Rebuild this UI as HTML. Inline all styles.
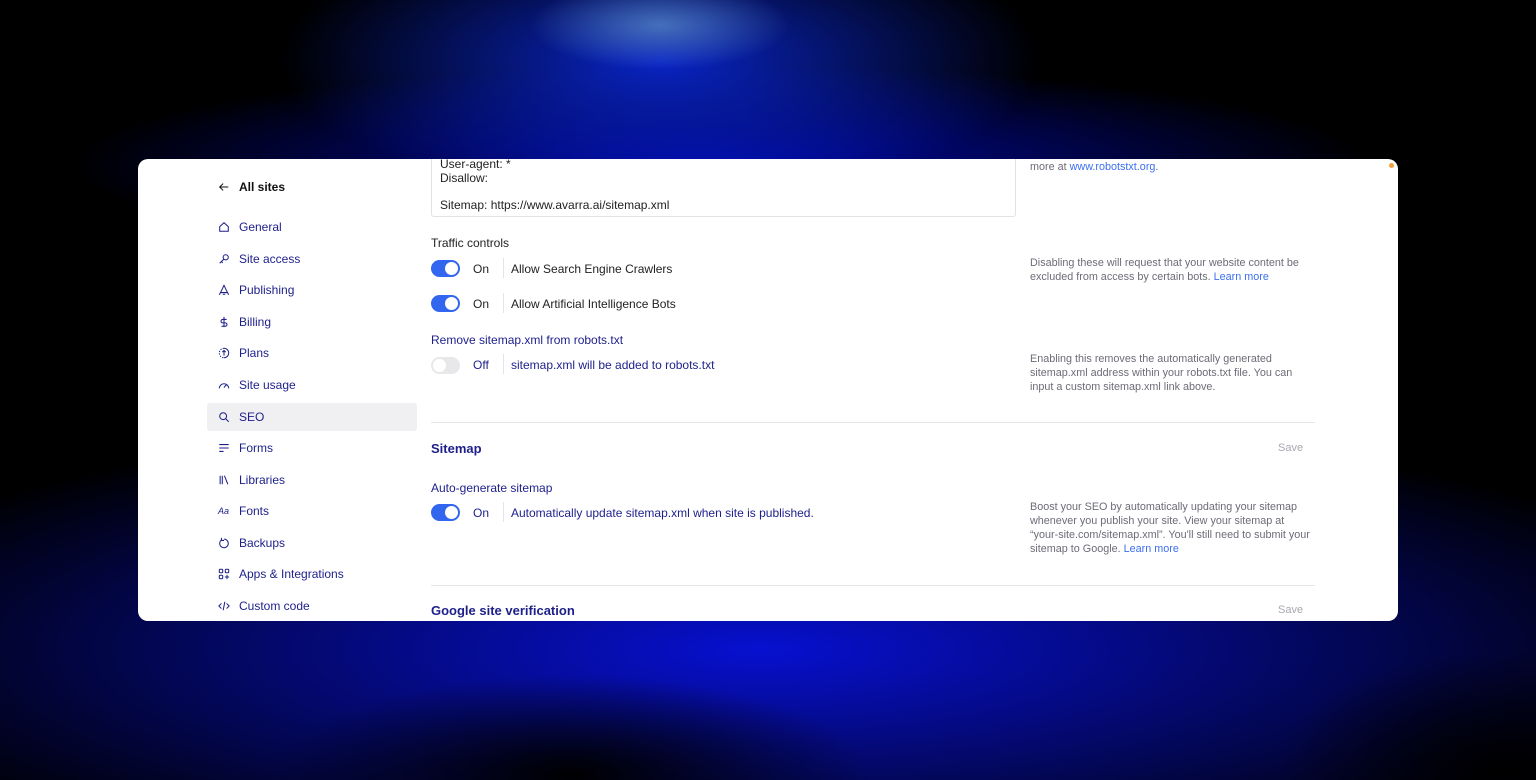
<!DOCTYPE html>
<html><head><meta charset="utf-8"><style>
*{box-sizing:border-box;margin:0;padding:0}
html,body{width:1536px;height:780px;overflow:hidden;background:#000}
body{position:relative;font-family:"Liberation Sans",sans-serif;}
.bg{position:absolute;inset:0;background:
radial-gradient(ellipse 130px 45px at 660px 25px,rgba(90,140,200,.75),rgba(90,140,200,0) 100%),
radial-gradient(ellipse 380px 140px at 660px 60px,rgba(10,40,220,.9),rgba(10,30,200,0) 100%),
radial-gradient(ellipse 650px 100px at 720px 165px,rgba(0,10,190,.85),rgba(0,0,150,0) 100%),
radial-gradient(ellipse 300px 100px at 570px 775px,#000,rgba(0,0,0,0) 100%),
radial-gradient(ellipse 220px 120px at 1500px 770px,#000,rgba(0,0,0,0) 100%),
radial-gradient(ellipse 1000px 240px at 760px 650px,#0710d0,rgba(5,10,200,0) 100%),
#000;}
.card{position:absolute;left:138px;top:159px;width:1260px;height:462px;background:#fff;border-radius:10px;overflow:hidden;}
.nav{position:absolute;left:69px;height:28px;width:210px;display:flex;align-items:center;padding-left:11px;font-size:12px;color:#1d1f8a}
.nav svg{width:12px;height:12px;margin-right:9px;stroke:#1d1f8a;fill:none;stroke-width:1.2}
.sel{background:#f0eff2;border-radius:3px}
.c{position:absolute;font-size:12px;color:#222}
.ta{position:absolute;left:293px;top:-12px;width:585px;height:70px;border:1px solid #e2e2e6;border-radius:3px;padding:10px 8px;font-size:12px;line-height:13.5px;color:#222}
.tg{position:absolute;width:29px;height:17px;border-radius:9px;background:#3366ee}
.tg::after{content:"";position:absolute;right:2px;top:2px;width:13px;height:13px;border-radius:50%;background:#fff}
.tg.off{background:#e8e8ea}
.tg.off::after{left:2px;right:auto}
.sep{position:absolute;width:1px;height:20px;background:#e4e4e8}
.desc{position:absolute;left:892px;font-size:10.8px;line-height:14px;color:#6c6c78;width:290px}
.desc a{color:#3c6ff0;text-decoration:none}
.hr{position:absolute;left:293px;width:884px;height:1px;background:#e6e6ea}
.h{position:absolute;left:293px;font-size:13px;font-weight:bold;color:#1d1f8a}
.save{position:absolute;left:1140px;font-size:11px;color:#a8a8b0}
.navy{color:#1d1f8a}
</style></head><body>
<div class="bg"></div>
<div class="card">
 <div class="nav" style="top:14px;color:#111;font-weight:bold"><svg viewBox="0 0 14 14" style="stroke:#111"><path d="M12 7H2M6 3L2 7l4 4"/></svg>All sites</div>
 <div class="nav" style="top:54px"><svg viewBox="0 0 14 14"><path d="M2 6.5L7 2l5 4.5V12H2z"/></svg>General</div>
 <div class="nav" style="top:86px"><svg viewBox="0 0 14 14"><circle cx="9" cy="5" r="3"/><path d="M7 7L2 12M4 10l1.5 1.5"/></svg>Site access</div>
 <div class="nav" style="top:117px"><svg viewBox="0 0 14 14"><path d="M7 1.5L11 10H3zM3 10l-1.5 2.5M11 10l1.5 2.5M5.5 12h3"/></svg>Publishing</div>
 <div class="nav" style="top:149px"><svg viewBox="0 0 14 14"><path d="M7 1v12M10 4H5.5a2 2 0 000 4h3a2 2 0 010 4H4"/></svg>Billing</div>
 <div class="nav" style="top:180px"><svg viewBox="0 0 14 14"><path d="M7 1.5a5.5 5.5 0 110 11" /><path d="M7 1.5a5.5 5.5 0 000 11" stroke-dasharray="1.5 1.5"/><path d="M7 10V4M5 6l2-2 2 2"/></svg>Plans</div>
 <div class="nav" style="top:212px"><svg viewBox="0 0 14 14"><path d="M1.5 11a5.5 5.5 0 0111 0M7 10l3-4"/></svg>Site usage</div>
 <div class="nav sel" style="top:244px"><svg viewBox="0 0 14 14"><circle cx="6" cy="6" r="4"/><path d="M9 9l3.5 3.5"/></svg>SEO</div>
 <div class="nav" style="top:275px"><svg viewBox="0 0 14 14"><path d="M1.5 3h11M1.5 7h11M1.5 11h5"/></svg>Forms</div>
 <div class="nav" style="top:307px"><svg viewBox="0 0 14 14"><path d="M2.5 2v10M5 2v10M7.5 2l4 10"/></svg>Libraries</div>
 <div class="nav" style="top:338px"><span style="font-size:9px;font-style:italic;width:12px;margin-right:9px">Aa</span>Fonts</div>
 <div class="nav" style="top:370px"><svg viewBox="0 0 14 14"><path d="M4 3.5a5 5 0 103-1M4 1v3h3"/></svg>Backups</div>
 <div class="nav" style="top:401px"><svg viewBox="0 0 14 14"><rect x="1.5" y="1.5" width="4" height="4" rx="1"/><rect x="8.5" y="1.5" width="4" height="4" rx="1"/><rect x="1.5" y="8.5" width="4" height="4" rx="1"/><path d="M10.5 8v5M8 10.5h5"/></svg>Apps &amp; Integrations</div>
 <div class="nav" style="top:433px"><svg viewBox="0 0 14 14"><path d="M4 4L1 7l3 3M10 4l3 3-3 3M8 2L6 12"/></svg>Custom code</div>

 <div class="ta">User-agent: *<br>Disallow:<br><br>Sitemap: https://www.avarra.ai/sitemap.xml</div>
 <div class="desc" style="top:1px">more at <a>www.robotstxt.org</a>.</div>

 <div class="c" style="left:293px;top:77px">Traffic controls</div>
 <div class="tg" style="left:293px;top:101px"></div><div class="c" style="left:335px;top:103px">On</div><div class="sep" style="left:365px;top:99px"></div><div class="c" style="left:373px;top:103px">Allow Search Engine Crawlers</div>
 <div class="tg" style="left:293px;top:136px"></div><div class="c" style="left:335px;top:138px">On</div><div class="sep" style="left:365px;top:134px"></div><div class="c" style="left:373px;top:138px">Allow Artificial Intelligence Bots</div>
 <div class="desc" style="top:97px">Disabling these will request that your website content be excluded from access by certain bots. <a>Learn more</a></div>

 <div class="c navy" style="left:293px;top:174px">Remove sitemap.xml from robots.txt</div>
 <div class="tg off" style="left:293px;top:198px"></div><div class="c navy" style="left:335px;top:199px">Off</div><div class="sep" style="left:365px;top:195px"></div><div class="c navy" style="left:373px;top:199px">sitemap.xml will be added to robots.txt</div>
 <div class="desc" style="top:193px;width:280px">Enabling this removes the automatically generated sitemap.xml address within your robots.txt file. You can input a custom sitemap.xml link above.</div>

 <div class="hr" style="top:263px"></div>
 <div class="h" style="top:282px">Sitemap</div><div class="save" style="top:283px">Save</div>
 <div class="c navy" style="left:293px;top:322px">Auto-generate sitemap</div>
 <div class="tg" style="left:293px;top:345px"></div><div class="c navy" style="left:335px;top:347px">On</div><div class="sep" style="left:365px;top:343px"></div><div class="c navy" style="left:373px;top:347px">Automatically update sitemap.xml when site is published.</div>
 <div class="desc" style="top:341px;width:280px">Boost your SEO by automatically updating your sitemap whenever you publish your site. View your sitemap at “your-site.com/sitemap.xml”. You'll still need to submit your sitemap to Google. <a>Learn more</a></div>
 <div class="hr" style="top:426px"></div>
 <div class="h" style="top:444px">Google site verification</div><div class="save" style="top:445px">Save</div>
 <div style="position:absolute;left:1251px;top:4px;width:5px;height:5px;border-radius:50%;background:#f5a040"></div>
</div>
</body></html>
